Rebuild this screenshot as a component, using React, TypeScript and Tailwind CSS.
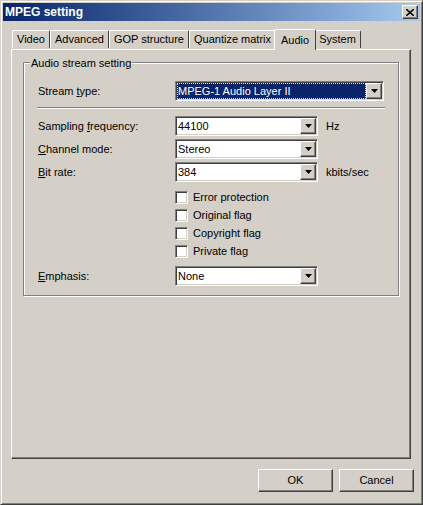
const bevelOut = 'border border-t-white border-l-white border-r-[#404040] border-b-[#404040] shadow-[inset_-1px_-1px_0_#808080]'
const sunken = 'border border-t-[#808080] border-l-[#808080] border-r-white border-b-white shadow-[inset_1px_1px_0_#404040,inset_-1px_-1px_0_#d4d0c8]'

function Arrow() {
  return (
    <div className={`w-[16px] h-[16px] bg-[#d4d0c8] flex items-center justify-center ${bevelOut}`}>
      <svg width="7" height="4" viewBox="0 0 7 4"><path d="M0 0h7L3.5 4z" fill="#000" /></svg>
    </div>
  )
}

function Select({ value, width, selected }: { value: string; width: number; selected?: boolean }) {
  return (
    <div className={`h-[20px] bg-white flex items-center p-[1px] ${sunken}`} style={{ width }}>
      <div className={`flex-1 h-full flex items-center px-[1px] ${selected ? 'bg-[#0a246a] text-white outline-1 outline-dotted outline-[#f0e68c] -outline-offset-1' : ''}`}>
        {value}
      </div>
      <Arrow />
    </div>
  )
}

function Row({ label, u, value, unit, mt }: { label: string; u: number; value: string; unit?: string; mt: string }) {
  return (
    <div className={`flex items-center ${mt}`}>
      <div className="w-[151px] pl-[14px]">
        {label.slice(0, u)}<span className="underline">{label[u]}</span>{label.slice(u + 1)}
      </div>
      <Select value={value} width={143} />
      {unit && <span className="ml-[8px]">{unit}</span>}
    </div>
  )
}

function Check({ label }: { label: string }) {
  return (
    <div className="flex items-center h-[18px] pl-[151px]">
      <div className={`w-[13px] h-[13px] bg-white ${sunken}`} />
      <span className="ml-[5px]">{label}</span>
    </div>
  )
}

export default function App() {
  const tabs = ['Video', 'Advanced', 'GOP structure', 'Quantize matrix', 'Audio', 'System']
  return (
    <div className="w-[423px] h-[505px] bg-[#d4d0c8] text-[11px] text-black border border-t-[#d4d0c8] border-l-[#d4d0c8] border-r-[#404040] border-b-[#404040] p-[2px] shadow-[inset_1px_1px_0_white,inset_-1px_-1px_0_#808080] flex flex-col" style={{ fontFamily: '"Liberation Sans", Arial, sans-serif' }}>
      <div className="h-[18px] flex items-center justify-between pl-[2px] pr-[2px] bg-gradient-to-r from-[#0a246a] to-[#a6caf0]">
        <span className="text-white font-bold text-[12px]">MPEG setting</span>
        <div className={`w-[16px] h-[14px] bg-[#d4d0c8] flex items-center justify-center ${bevelOut}`}>
          <svg width="8" height="7" viewBox="0 0 8 7"><path d="M0 0l8 7M8 0L0 7" stroke="#000" strokeWidth="1.6" /></svg>
        </div>
      </div>
      <div className="flex items-end h-[28px] pl-[9px]">
        {tabs.map((t) => {
          const sel = t === 'Audio'
          return (
            <div key={t} className={`border-t border-l border-r border-t-white border-l-white border-r-[#404040] rounded-t-[2px] bg-[#d4d0c8] flex items-center ${sel ? 'h-[21px] -mx-[2px] relative z-10 -mb-[1px] px-[6px]' : 'h-[18px] mb-[1px] px-[4px]'}`}>
              {t}
            </div>
          )
        })}
      </div>
      <div className={`ml-[8px] w-[400px] h-[410px] ${bevelOut} border-t-white px-[11px] pt-[12px]`}>
        <div className="relative h-[234px] border border-[#808080] shadow-[1px_1px_0_white,inset_1px_1px_0_white]">
          <span className="absolute -top-[8px] left-[6px] bg-[#d4d0c8] px-[1px]">Audio stream setting</span>
          <div className="flex items-center mt-[18px]">
            <div className="w-[151px] pl-[14px]">Stream <span className="underline">t</span>ype:</div>
            <Select value="MPEG-1 Audio Layer II" width={209} selected />
          </div>
          <div className="mx-[13px] mt-[6px] h-[2px] border-t border-t-[#808080] border-b border-b-white" />
          <Row label="Sampling frequency:" u={9} value="44100" unit="Hz" mt="mt-[7px]" />
          <Row label="Channel mode:" u={0} value="Stereo" mt="mt-[3px]" />
          <Row label="Bit rate:" u={0} value="384" unit="kbits/sec" mt="mt-[3px]" />
          <div className="mt-[6px]">
            <Check label="Error protection" />
            <Check label="Original flag" />
            <Check label="Copyright flag" />
            <Check label="Private flag" />
          </div>
          <Row label="Emphasis:" u={0} value="None" mt="mt-[6px]" />
        </div>
      </div>
      <div className="flex justify-end gap-[6px] mt-[10px] pr-[6px]">
        {['OK', 'Cancel'].map((b) => (
          <div key={b} className={`w-[75px] h-[23px] flex items-center justify-center ${bevelOut}`}>{b}</div>
        ))}
      </div>
    </div>
  )
}
